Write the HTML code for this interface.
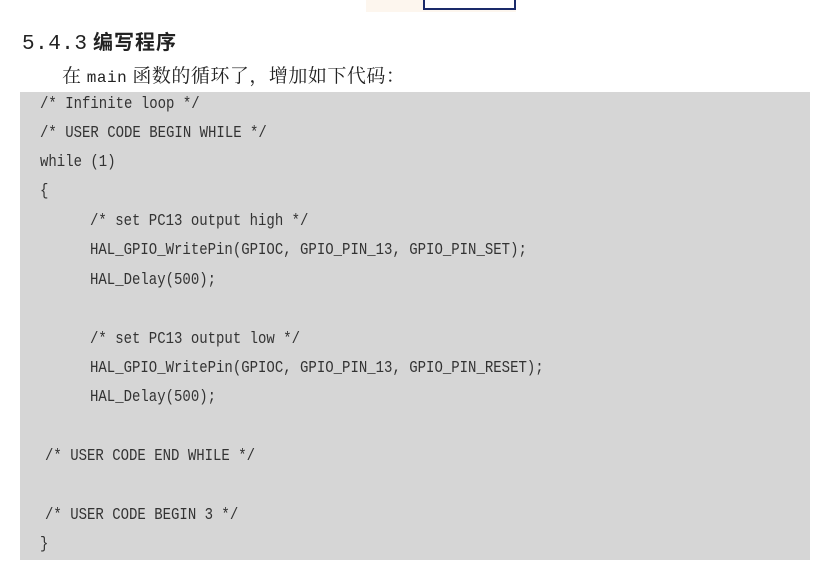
<!DOCTYPE html>
<html><head><meta charset="utf-8"><style>
body{margin:0;width:838px;height:583px;background:#fff;position:relative;overflow:hidden;font-family:"Liberation Serif","Noto Serif CJK SC",serif;color:#222}
.img{position:absolute;left:366px;top:0;width:150px;height:12px;background:#fdf6ee}
.img2{position:absolute;left:423px;top:-4px;width:89px;height:12px;border:2px solid #1a2a6a;border-top:none;background:#fff}
h1{position:absolute;left:22px;top:26px;margin:0;font-size:22px;font-weight:normal;white-space:nowrap}
h1 .n{font-family:"Liberation Mono",monospace;font-size:21px;letter-spacing:0.5px}
h1 b{font-family:"Noto Sans CJK SC",sans-serif;font-weight:bold;font-size:20px;letter-spacing:1px}
.p{position:absolute;left:62px;top:61px;font-size:19px;white-space:nowrap;letter-spacing:0.5px}
.code{position:absolute;left:20px;top:92px;width:790px;height:468px;background:#d6d6d6}
.l{position:absolute;font-family:"Liberation Mono",monospace;font-size:14px;white-space:pre;color:#333;line-height:16px;transform:scaleY(1.2);transform-origin:left top}
</style></head><body>
<div class="img"></div><div class="img2"></div>
<h1><span class="n">5.4.3</span> <b>编写程序</b></h1>
<div class="p">在 <span style="font-family:'Liberation Mono',monospace;font-size:16px">main</span> 函数的循环了，增加如下代码：</div>
<div class="code"></div>
<div class="l" style="left:40px;top:95px">/* Infinite loop */</div>
<div class="l" style="left:40px;top:124px">/* USER CODE BEGIN WHILE */</div>
<div class="l" style="left:40px;top:153px">while (1)</div>
<div class="l" style="left:40px;top:182px">{</div>
<div class="l" style="left:90px;top:212px">/* set PC13 output high */</div>
<div class="l" style="left:90px;top:241px">HAL_GPIO_WritePin(GPIOC, GPIO_PIN_13, GPIO_PIN_SET);</div>
<div class="l" style="left:90px;top:271px">HAL_Delay(500);</div>
<div class="l" style="left:90px;top:330px">/* set PC13 output low */</div>
<div class="l" style="left:90px;top:359px">HAL_GPIO_WritePin(GPIOC, GPIO_PIN_13, GPIO_PIN_RESET);</div>
<div class="l" style="left:90px;top:388px">HAL_Delay(500);</div>
<div class="l" style="left:45px;top:447px">/* USER CODE END WHILE */</div>
<div class="l" style="left:45px;top:506px">/* USER CODE BEGIN 3 */</div>
<div class="l" style="left:40px;top:535px">}</div>
</body></html>
